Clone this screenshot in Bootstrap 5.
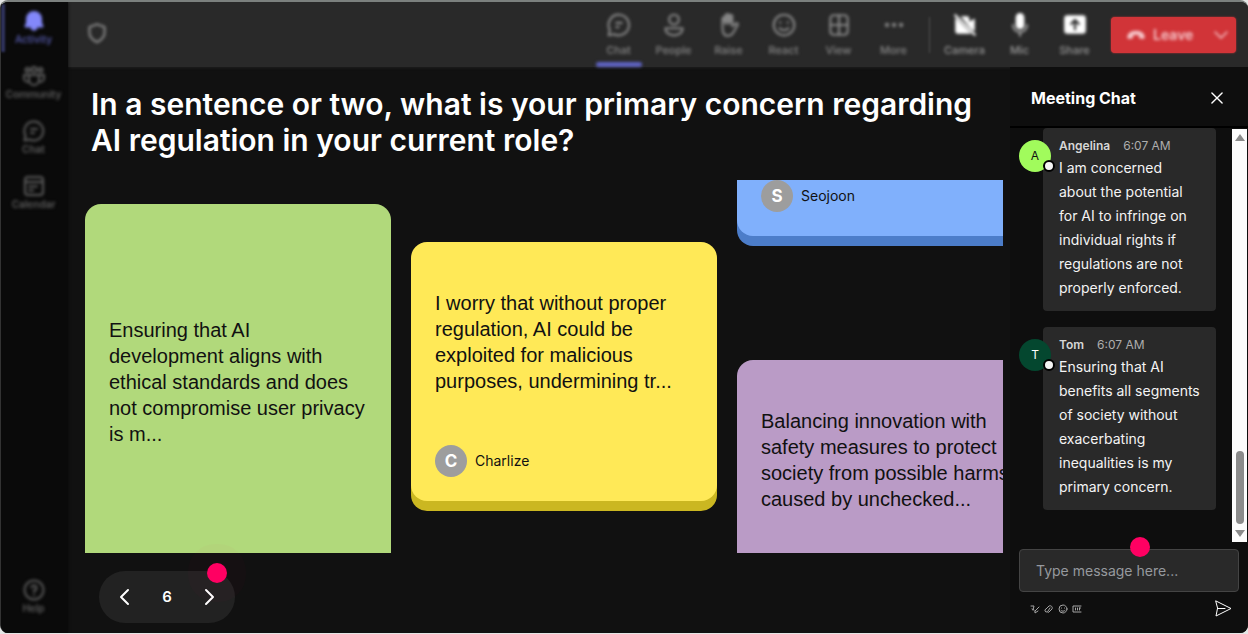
<!DOCTYPE html>
<html lang="en">
<head>
<meta charset="utf-8">
<meta name="viewport" content="width=device-width, initial-scale=1">
<title>Meeting</title>
<link href="https://cdn.jsdelivr.net/npm/bootstrap@5.3.0/dist/css/bootstrap.min.css" rel="stylesheet">
<style>
  body { background: #e4e6e5; font-family: Inter, "Liberation Sans", sans-serif; }
  svg { display: block; fill: none; stroke: currentColor; stroke-width: 1.5; stroke-linecap: round; stroke-linejoin: round; }
  .app-shell { height: 100vh; padding-bottom: 1px; }
  .app-frame { background: #111; border-radius: 8px; border-top: 2px solid #7b807e; border-left: 1px solid #333; }

  /* Side rail */
  .rail { width: 67px; background: #0a0a0a; box-shadow: 0 0 3px #0a0a0a; padding: 7px 2px 0 0; }
  .rail-item { height: 55px; width: 100%; color: #5c5c5c; font-size: 10px; line-height: 12px; font-weight: 600; filter: blur(1px) blur(1px); text-decoration: none; }
  .rail-item svg { width: 24px; height: 24px; stroke-width: 2; }
  .rail-item.current { color: #8388fa; }
  .rail-item.current span { color: #5054a0; }
  .rail-mark { left: 0; top: 2px; width: 4px; height: 48px; background: #31345f; filter: blur(1px); }

  /* Meeting bar */
  .meet-bar { height: 65px; background: #292929; box-shadow: 0 0 3px #292929; padding: 0 12px 0 16px; }
  .tool { width: 55px; height: 65px; padding: 10px 0 0; border: 0; background: none; color: #868686; font-size: 11px; line-height: 16px; font-weight: 500; filter: blur(1px) blur(1px); }
  .tool svg { width: 26px; height: 26px; stroke-width: 2; margin-bottom: 4px; }
  .tool.bright svg { color: #fff; }
  .tool.bright { color: #989898; }
  .tool-line { width: 46px; height: 5px; background: #5f63c4; bottom: 0; left: 5px; }
  .bar-rule { width: 1px; height: 36px; margin: 0 7px 0 8px; background: #505050; filter: blur(1px); }
  .leave { width: 125px; height: 36px; margin-left: 9px; border-radius: 4px; background: #d13438; box-shadow: 0 0 2px #d13438; color: #f6c8cc; }
  .leave button { border: 0; background: none; color: inherit; filter: blur(1px) blur(1px); font-size: 14px; font-weight: 600; }

  /* Question board */
  .question { font-size: 30px; line-height: 36px; font-weight: 600; padding: 19px 24px 0 23px; color: #fff; }
  .board { margin: 22px 7px 0 17px; min-height: 0; gap: 20px; }
  .lane { width: 306px; }
  .note { border-radius: 16px; color: #111; padding: 24px; font-family: "Liberation Sans", Arial, sans-serif; font-size: 20px; line-height: 26px; }
  .note p { margin: 24px 0 51px; }
  .note-green { background: #b1d97b; margin-top: 24px; }
  .note-green p { margin: 89px 0 120px; }
  .note-yellow { background: #ffe957; box-shadow: 0 10px 0 #cbb721; margin-top: 62px; }
  .note-blue { background: #80b0fc; box-shadow: 0 10px 0 #4c7dc9; border-radius: 0 0 16px 16px; padding-top: 0; }
  .note-purple { background: #ba9bc6; margin-top: 124px; }
  .author { font-family: Inter, sans-serif; font-size: 14px; line-height: 20px; }
  .initial { width: 32px; height: 32px; background: #9d9d9d; color: #fff; font-size: 17px; font-weight: 700; }
  .pager-row { padding: 18px 31px 10px; }
  .pager { width: 136px; height: 52px; background: #222; color: #fff; font-size: 15px; font-weight: 600; padding: 0 16px; }
  .pager button { border: 0; background: none; color: inherit; padding: 0; }
  .hotspot { width: 20px; height: 20px; background: #ff0062; }
  .pager .hotspot { right: 8px; top: -8px; box-shadow: 0 0 0 19px rgba(255, 0, 98, .02); }

  /* Chat panel */
  .chat { width: 238px; background: #0e0e0e; color: #fff; }
  .chat-head { height: 61px; padding: 2px 21px 0; border-bottom: 2px solid #000; }
  .chat-head h2 { font-size: 16px; line-height: 24px; font-weight: 700; margin: 0; }
  .chat-list { min-height: 0; }
  .message { padding-left: 9px; margin-bottom: 16px; }
  .avatar { width: 32px; height: 32px; margin: 12px -8px 0 0; z-index: 1; font-size: 12px; }
  .presence { width: 12px; height: 12px; right: -4px; bottom: 0; background: #f4f4f4; border: 2px solid #000; }
  .bubble { width: 173px; padding: 8px 16px 11px; background: #292929; border-radius: 4px; font-size: 14px; line-height: 24px; color: #f4f4f4; }
  .byline { font-size: 12px; line-height: 20px; color: #adadad; gap: 13px; }
  .byline strong { color: #d6d6d6; font-weight: 600; }
  .track { width: 15px; background: #fcfcfc; padding: 5px 0; margin: 1px 1px 0 0; }
  .thumb { width: 8px; height: 73px; background: #8b8b8b; margin-bottom: 6px; }
  .track svg { fill: #8b8b8b; stroke: none; }
  .composer { padding: 7px 9px 0; }
  .composer input { height: 43px; padding: 0 16px; background: #292929; border: 1px solid #444; border-radius: 4px; color: #fff; font-size: 14px; }
  .composer input::placeholder { color: #96999e; opacity: 1; }
  .composer .hotspot { left: 111px; top: -12px; }
  .compose-tools { height: 41px; padding: 0 16px 8px 20px; color: #a5a5a5; }
  .compose-tools button { border: 0; padding: 0; background: none; color: inherit; }
  .compose-tools svg { stroke-width: 1; }
</style>
</head>
<body>
<div class="app-shell">
<div class="app-frame d-flex h-100 overflow-hidden">

  <nav class="rail d-flex flex-column flex-shrink-0 position-relative" aria-label="Apps">
    <div class="rail-mark position-absolute"></div>
    <a href="#" class="rail-item current d-flex flex-column align-items-center">
      <svg viewBox="0 0 24 24"><path fill="currentColor" d="M12 3a7 7 0 0 0-7 7v4l-1.500 3.500h17L19 14v-4a7 7 0 0 0-7-7zM9.500 19.500h5L12 21z"/></svg><span>Activity</span></a>
    <a href="#" class="rail-item d-flex flex-column align-items-center">
      <svg viewBox="0 0 24 24"><circle cx="5.500" cy="6" r="2"/><circle cx="12" cy="5.500" r="2.500"/><circle cx="18.500" cy="6" r="2"/><path d="M7 11h10v5a5 5 0 0 1-10 0zM6 11H2v3a4 4 0 0 0 4 4M18 11h4v3a4 4 0 0 1-4 4"/></svg><span>Community</span></a>
    <a href="#" class="rail-item d-flex flex-column align-items-center">
      <svg viewBox="0 0 24 24"><path d="M12 2.500a9.500 9.500 0 1 1-4.500 18L2.500 21.500l1-5A9.500 9.500 0 0 1 12 2.500zM9 10h6M9 14h3"/></svg><span>Chat</span></a>
    <a href="#" class="rail-item d-flex flex-column align-items-center">
      <svg viewBox="0 0 24 24"><rect x="3" y="3" width="18" height="18" rx="3"/><path d="M3 8h18M7 12.500h8M7 16.500h4"/></svg><span>Calendar</span></a>
    <a href="#" class="rail-item d-flex flex-column align-items-center mt-auto">
      <svg viewBox="0 0 24 24"><circle cx="12" cy="12" r="9.500"/><path d="M9.500 9.500a2.500 2.500 0 1 1 2.500 3v1.500M12 17v.2"/></svg><span>Help</span></a>
  </nav>

  <div class="d-flex flex-column flex-fill overflow-hidden">
    <header class="meet-bar d-flex align-items-center flex-shrink-0">
      <button class="tool me-auto p-0 w-auto d-flex align-items-center" aria-label="Security"><svg viewBox="0 0 24 24"><path d="M12 4l7 2.500v5c0 4-3 7-7 9-4-2-7-5-7-9v-5z"/></svg></button>
      <button class="tool position-relative d-flex flex-column align-items-center"><svg viewBox="0 0 24 24"><path d="M12 2.500a9.500 9.500 0 1 1-4.500 18L2.500 21.500l1-5A9.500 9.500 0 0 1 12 2.500zM9.500 10h5M9.500 14h2"/></svg>Chat<span class="tool-line rounded-pill position-absolute"></span></button>
      <button class="tool d-flex flex-column align-items-center"><svg viewBox="0 0 24 24"><circle cx="12" cy="7" r="4.500"/><path d="M4 15h16c0 4-3.500 6.500-8 6.500S4 19 4 15z"/></svg>People</button>
      <button class="tool d-flex flex-column align-items-center"><svg viewBox="0 0 24 24"><path d="M6 14V6.500a1.500 1.500 0 0 1 3 0V11V3.500a1.500 1.500 0 0 1 3 0V11 4a1.500 1.500 0 0 1 3 0v9l3.500-2.500c1-.5 2 .5 1.500 1.500L16.500 18c-1.500 3-3 4-5.500 4-3 0-5-3-5-8zM8 9V4M11 9V3M14 9V4"/></svg>Raise</button>
      <button class="tool d-flex flex-column align-items-center"><svg viewBox="0 0 24 24"><circle cx="12" cy="12" r="9.500"/><path d="M8.500 9.500v.5M15.500 9.500v.5M8 15c2 2.500 6 2.500 8 0"/></svg>React</button>
      <button class="tool d-flex flex-column align-items-center"><svg viewBox="0 0 24 24"><rect x="4" y="3" width="16" height="18" rx="3"/><path d="M12 3v18M4 12h16"/></svg>View</button>
      <button class="tool d-flex flex-column align-items-center"><svg viewBox="0 0 24 24"><path stroke-width="4" d="M5.500 12h.1M12 12h.1M18.500 12h.1"/></svg>More</button>
      <div class="bar-rule"></div>
      <button class="tool bright d-flex flex-column align-items-center"><svg viewBox="0 0 24 24"><path fill="currentColor" stroke="none" d="M3 5l15 15H5a2 2 0 0 1-2-2zM8 4h6a2 2 0 0 1 2 2v3l5-3v12l-4-3z"/><path d="M3 3l18 18"/></svg>Camera</button>
      <button class="tool bright d-flex flex-column align-items-center"><svg viewBox="0 0 24 24"><rect x="9" y="2" width="6" height="13" rx="3" fill="currentColor"/><path stroke="#999" d="M5.500 12a6.500 6.500 0 0 0 13 0M12 18.500V22"/></svg>Mic</button>
      <button class="tool bright d-flex flex-column align-items-center"><svg viewBox="0 0 24 24"><rect x="3" y="4" width="18" height="15" rx="2" fill="currentColor"/><path stroke="#292929" d="M12 16V8M8.500 11L12 7.500l3.500 3.500"/></svg>Share</button>
      <div class="leave d-flex align-items-center justify-content-between">
        <button class="d-flex align-items-center gap-2 ps-3 pe-0"><svg width="18" height="12" viewBox="0 0 20 12"><path fill="currentColor" d="M1 8c0-8 18-8 18 0 0 2-1 2-5 1V6c-2-1-6-1-8 0v3c-4 1-5 1-5-1z"/></svg>Leave</button>
        <button class="pe-2" aria-label="Leave options"><svg width="14" height="10" viewBox="0 0 14 10"><path d="M1 2l6 6 6-6"/></svg></button>
      </div>
    </header>

    <div class="d-flex flex-fill overflow-hidden">
      <main class="d-flex flex-column flex-fill overflow-hidden">
        <h1 class="question m-0">In a sentence or two, what is your primary concern regarding AI regulation in your current role?</h1>
        <section class="board d-flex flex-fill overflow-hidden" aria-label="Responses">
          <div class="lane flex-shrink-0">
            <article class="note note-green"><p>Ensuring that AI development aligns with ethical standards and does not compromise user privacy is m...</p></article>
          </div>
          <div class="lane flex-shrink-0">
            <article class="note note-yellow"><p>I worry that without proper regulation, AI could be exploited for malicious purposes, undermining tr...</p>
              <div class="author d-flex align-items-center gap-2"><span class="initial rounded-circle d-flex align-items-center justify-content-center">C</span>Charlize</div></article>
          </div>
          <div class="lane flex-shrink-0">
            <article class="note note-blue">
              <div class="author d-flex align-items-center gap-2"><span class="initial rounded-circle d-flex align-items-center justify-content-center">S</span>Seojoon</div></article>
            <article class="note note-purple"><p>Balancing innovation with safety measures to protect society from possible harms caused by unchecked...</p></article>
          </div>
        </section>
        <div class="pager-row">
          <div class="pager rounded-pill position-relative d-flex align-items-center justify-content-between">
            <button aria-label="Previous"><svg width="20" height="20" viewBox="0 0 20 20"><path stroke-width="2" d="M13 3l-7 7 7 7"/></svg></button>
            <span>6</span>
            <button aria-label="Next"><svg width="20" height="20" viewBox="0 0 20 20"><path stroke-width="2" d="M7 3l7 7-7 7"/></svg></button>
            <span class="hotspot rounded-circle position-absolute"></span>
          </div>
        </div>
      </main>

      <aside class="chat d-flex flex-column flex-shrink-0">
        <div class="chat-head d-flex align-items-center justify-content-between flex-shrink-0">
          <h2>Meeting Chat</h2>
          <button class="border-0 bg-transparent p-0 text-white me-1" aria-label="Close"><svg width="12" height="12" viewBox="0 0 13 13"><path d="M1 1l11 11M12 1L1 12"/></svg></button>
        </div>
        <div class="chat-list d-flex flex-fill overflow-hidden">
          <div class="flex-fill">
            <div class="message d-flex align-items-start">
              <span class="avatar position-relative rounded-circle d-flex align-items-center justify-content-center flex-shrink-0" style="background:#a1fb5c;color:#111">A<span class="presence rounded-circle position-absolute"></span></span>
              <div class="bubble"><div class="byline d-flex"><strong>Angelina</strong><span>6:07 AM</span></div>I am concerned about the potential for AI to infringe on individual rights if regulations are not properly enforced.</div>
            </div>
            <div class="message d-flex align-items-start">
              <span class="avatar position-relative rounded-circle d-flex align-items-center justify-content-center flex-shrink-0" style="background:#04472f;color:#fff">T<span class="presence rounded-circle position-absolute"></span></span>
              <div class="bubble"><div class="byline d-flex"><strong>Tom</strong><span>6:07 AM</span></div>Ensuring that AI benefits all segments of society without exacerbating inequalities is my primary concern.</div>
            </div>
          </div>
          <div class="track d-flex flex-column align-items-center flex-shrink-0" aria-hidden="true">
            <svg width="10" height="7" viewBox="0 0 10 7"><path d="M5 0l5 7H0z"/></svg>
            <div class="thumb rounded-pill mt-auto"></div>
            <svg width="10" height="7" viewBox="0 0 10 7"><path d="M5 7l5-7H0z"/></svg>
          </div>
        </div>
        <form class="composer">
          <div class="position-relative">
            <input class="w-100 d-block" type="text" placeholder="Type message here..." aria-label="Message">
            <span class="hotspot rounded-circle position-absolute"></span>
          </div>
        </form>
        <div class="compose-tools d-flex align-items-center">
          <div class="d-flex gap-1 me-auto">
            <button aria-label="Format"><svg width="10" height="10" viewBox="0 0 10 10"><path d="M1 2h3L3 6M2 5l2 1M5 7l4-4M5 7v2l3-2"/></svg></button>
            <button aria-label="Attach"><svg width="10" height="10" viewBox="0 0 10 10"><path d="M3 8a1.500 1.500 0 0 1-1-3l3-3c2-1 4 1 3 3L5 8c-1 1-2 0-1-1l2-3"/></svg></button>
            <button aria-label="Emoji"><svg width="10" height="10" viewBox="0 0 10 10"><circle cx="5" cy="5" r="4"/><path d="M3.500 4v.1M6.500 4v.1M3 6.500c1 1 3 1 4 0"/></svg></button>
            <button aria-label="GIF"><svg width="10" height="10" viewBox="0 0 10 10"><path d="M9 2H1v6h8M3.500 4v2M5.500 4v2M7.500 4h1M7.500 4v2"/></svg></button>
          </div>
          <button class="text-white" aria-label="Send"><svg width="17" height="17" viewBox="0 0 17 17"><path d="M1 1l15 7.500L1 16l1.500-7.500zM2.500 8.500H10"/></svg></button>
        </div>
      </aside>
    </div>
  </div>
</div>
</div>
<script src="https://cdn.jsdelivr.net/npm/bootstrap@5.3.0/dist/js/bootstrap.bundle.min.js"></script>
</body>
</html>
